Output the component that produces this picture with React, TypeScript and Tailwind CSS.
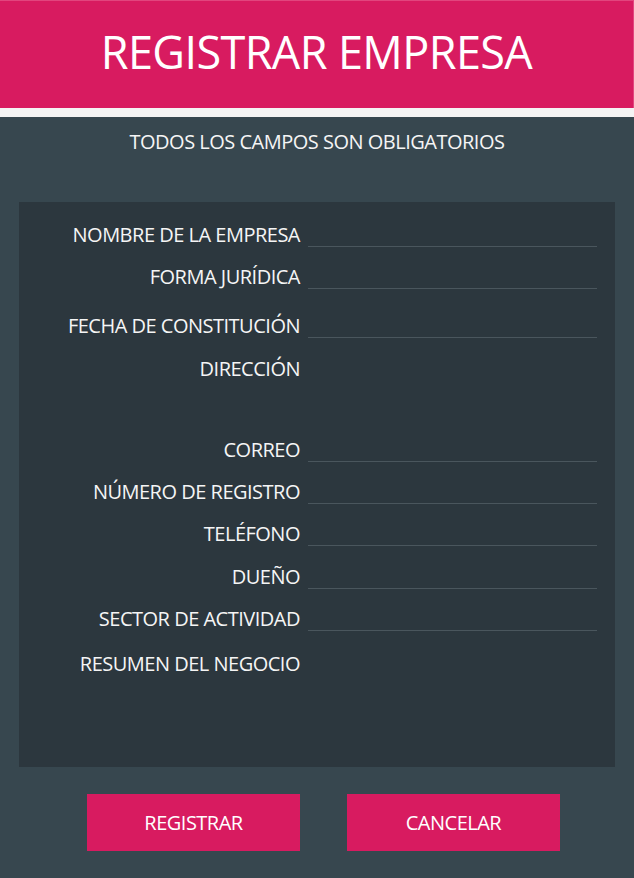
import React from "react";

type Row = { label: string; kind: "input" | "area"; mt: string; h?: string };

const rows: Row[] = [
  { label: "NOMBRE DE LA EMPRESA", kind: "input", mt: "mt-0" },
  { label: "FORMA JURÍDICA", kind: "input", mt: "mt-[8px]" },
  { label: "FECHA DE CONSTITUCIÓN", kind: "input", mt: "mt-[15px]" },
  { label: "DIRECCIÓN", kind: "area", mt: "mt-[14px]", h: "h-[76px]" },
  { label: "CORREO", kind: "input", mt: "mt-0" },
  { label: "NÚMERO DE REGISTRO", kind: "input", mt: "mt-[8px]" },
  { label: "TELÉFONO", kind: "input", mt: "mt-[8px]" },
  { label: "DUEÑO", kind: "input", mt: "mt-[9px]" },
  { label: "SECTOR DE ACTIVIDAD", kind: "input", mt: "mt-[8px]" },
  { label: "RESUMEN DEL NEGOCIO", kind: "area", mt: "mt-[16px]", h: "h-[100px]" },
];

export default function App() {
  return (
    <div
      className="min-h-screen w-[634px] bg-[#37474f] text-[#f5f5f5]"
      style={{ fontFamily: '"Open Sans", "Noto Sans", sans-serif' }}
    >
      <div className="h-[108px] bg-[#d81b60] border-t border-r border-[#e2457e] flex items-center justify-center">
        <h1 className="text-[45px] leading-[45px] tracking-[-0.6px] font-normal text-white mb-[6px]">
          REGISTRAR EMPRESA
        </h1>
      </div>
      <div className="h-[9px] bg-[#f4f4f4]" />
      <p className="mt-[15px] text-center text-[20px] leading-[20px] tracking-[-0.5px]">
        TODOS LOS CAMPOS SON OBLIGATORIOS
      </p>
      <div className="mx-[19px] mt-[50px] bg-[#2c373e] pt-[11px] pb-[20px] pr-[18px] flex flex-col">
        {rows.map((r) =>
          r.kind === "input" ? (
            <div key={r.label} className={`flex items-end h-[34px] ${r.mt}`}>
              <div className="w-[281px] text-right text-[20px] leading-[20px] tracking-[-0.5px] mb-[2px] whitespace-nowrap">
                {r.label}
              </div>
              <div className="ml-[8px] flex-1 h-full border-b border-[#4a565d]" />
            </div>
          ) : (
            <div key={r.label} className={`flex items-start ${r.h} ${r.mt}`}>
              <div className="w-[281px] text-right text-[20px] leading-[20px] tracking-[-0.5px] mt-[7px] whitespace-nowrap">
                {r.label}
              </div>
              <div className="ml-[8px] flex-1 h-full" />
            </div>
          )
        )}
      </div>
      <div className="mt-[27px] pl-[87px] flex gap-[47px]">
        <button className="w-[213px] h-[57px] bg-[#d81b60] text-white text-[20px] leading-[20px] tracking-[-0.5px] flex items-center justify-center">
          REGISTRAR
        </button>
        <button className="w-[213px] h-[57px] bg-[#d81b60] text-white text-[20px] leading-[20px] tracking-[-0.5px] flex items-center justify-center">
          CANCELAR
        </button>
      </div>
    </div>
  );
}
